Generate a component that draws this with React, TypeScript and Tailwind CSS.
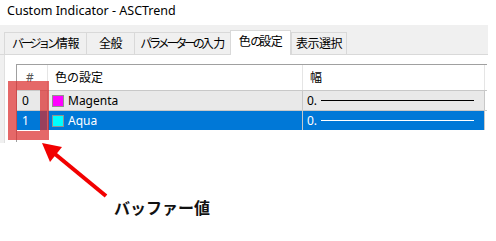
import React from 'react';

const tabs = [
  { label: 'バージョン情報', w: 'w-[82px]' },
  { label: '全般', w: 'w-[48px]' },
  { label: 'パラメーターの入力', w: 'w-[96px]' },
  { label: '色の設定', w: 'w-[61px]', active: true },
  { label: '表示選択', w: 'w-[56px]' },
];

const rows = [
  { idx: '0', name: 'Magenta', color: 'bg-[#ff00ff]', selected: false },
  { idx: '1', name: 'Aqua', color: 'bg-[#00ffff]', selected: true },
];

const TabLabel: React.FC<{ text: string }> = ({ text }) => (
  <span className="whitespace-nowrap text-[12px] text-black">
    {Array.from(text).map((ch, i) =>
      /[\u3040-\u30ff]/.test(ch) ? (
        <span key={i} className="tracking-[-3.2px]">{ch}</span>
      ) : (
        <span key={i} className="tracking-[-0.5px]">{ch}</span>
      )
    )}
  </span>
);

const TabStrip: React.FC = () => (
  <div className="w-[488px] h-[30px] bg-[#f0f0f0] border-b border-[#d9d9d9] flex items-end pl-[4px]">
    {tabs.map((t, i) => (
      <div
        key={t.label}
        className={
          t.active
            ? `${t.w} shrink-0 h-[25px] -mb-px bg-white border border-b-0 border-[#d9d9d9] flex items-center justify-center pb-[2px] relative z-10`
            : `${t.w} shrink-0 h-[22px] border-t border-l ${i === tabs.length - 1 ? 'border-r' : ''} border-[#d9d9d9] flex items-center justify-center`
        }
      >
        <TabLabel text={t.label} />
      </div>
    ))}
  </div>
);

const ColorTable: React.FC = () => (
  <div className="w-[471px] h-[78px] border-t border-l border-[#a0a0a0]">
    <div className="flex h-[25px] bg-white text-[12px]">
      <div className="w-[31px] border-r border-[#e5e5e5] flex items-center pl-[9px] text-[#555]">#</div>
      <div className="w-[255px] border-r border-[#e5e5e5] flex items-center pl-[7px]">色の設定</div>
      <div className="w-[182px] border-r border-[#e5e5e5] flex items-center pl-[7px]">幅</div>
    </div>
    {rows.map((r) => (
      <div
        key={r.idx}
        className={`flex h-[20px] border-t border-[#c8c8c8] text-[12px] ${
          r.selected ? 'bg-[#0078d7] text-white' : 'bg-[#e9e9e9] text-black'
        }`}
      >
        <div className="w-[31px] border-r border-[#c8c8c8] flex items-center pl-[5px]">{r.idx}</div>
        <div className="w-[255px] border-r border-[#c8c8c8] flex items-center pl-[4px] gap-[4px]">
          <span className={`w-[12px] h-[12px] border border-[#909090] ${r.color}`} />
          <span>{r.name}</span>
        </div>
        <div className="w-[182px] border-r border-[#c8c8c8] flex items-center pl-[4px] gap-[4px]">
          <span>0.</span>
          <span className={`w-[153px] h-px ${r.selected ? 'bg-white' : 'bg-black'}`} />
        </div>
        <div className="flex-1 bg-white" />
      </div>
    ))}
  </div>
);

export default function App() {
  return (
    <div className="relative w-[496px] h-[241px] bg-white overflow-hidden text-black font-['Noto_Sans','Noto_Sans_CJK_JP',sans-serif] text-[12px] leading-none">
      <div className="h-[25px] pl-[7px] pt-[5px] text-[12.5px]">Custom Indicator - ASCTrend</div>
      <TabStrip />
      <div className="flex h-[88px]">
        <div className="w-[5px] bg-[#f0f0f0] border-r border-[#e0e0e0]" />
        <div className="flex-1 pl-[11px] pt-[9px]">
          <ColorTable />
        </div>
      </div>

      {/* annotation */}
      <div className="absolute left-[8px] top-[81px] w-[41px] h-[59px] border-[9px] border-[rgba(218,40,40,0.7)]" />
      <svg className="absolute inset-0 pointer-events-none" width="496" height="241" viewBox="0 0 496 241">
        <line x1="106" y1="196" x2="55" y2="154" stroke="#f20000" strokeWidth="4" />
        <polygon points="42,143 62,147 50,162" fill="#f20000" />
      </svg>
      <div className="absolute left-[114px] top-[199px] text-[16px] font-bold text-[#111] leading-[18px]">
        バッファー値
      </div>
    </div>
  );
}
